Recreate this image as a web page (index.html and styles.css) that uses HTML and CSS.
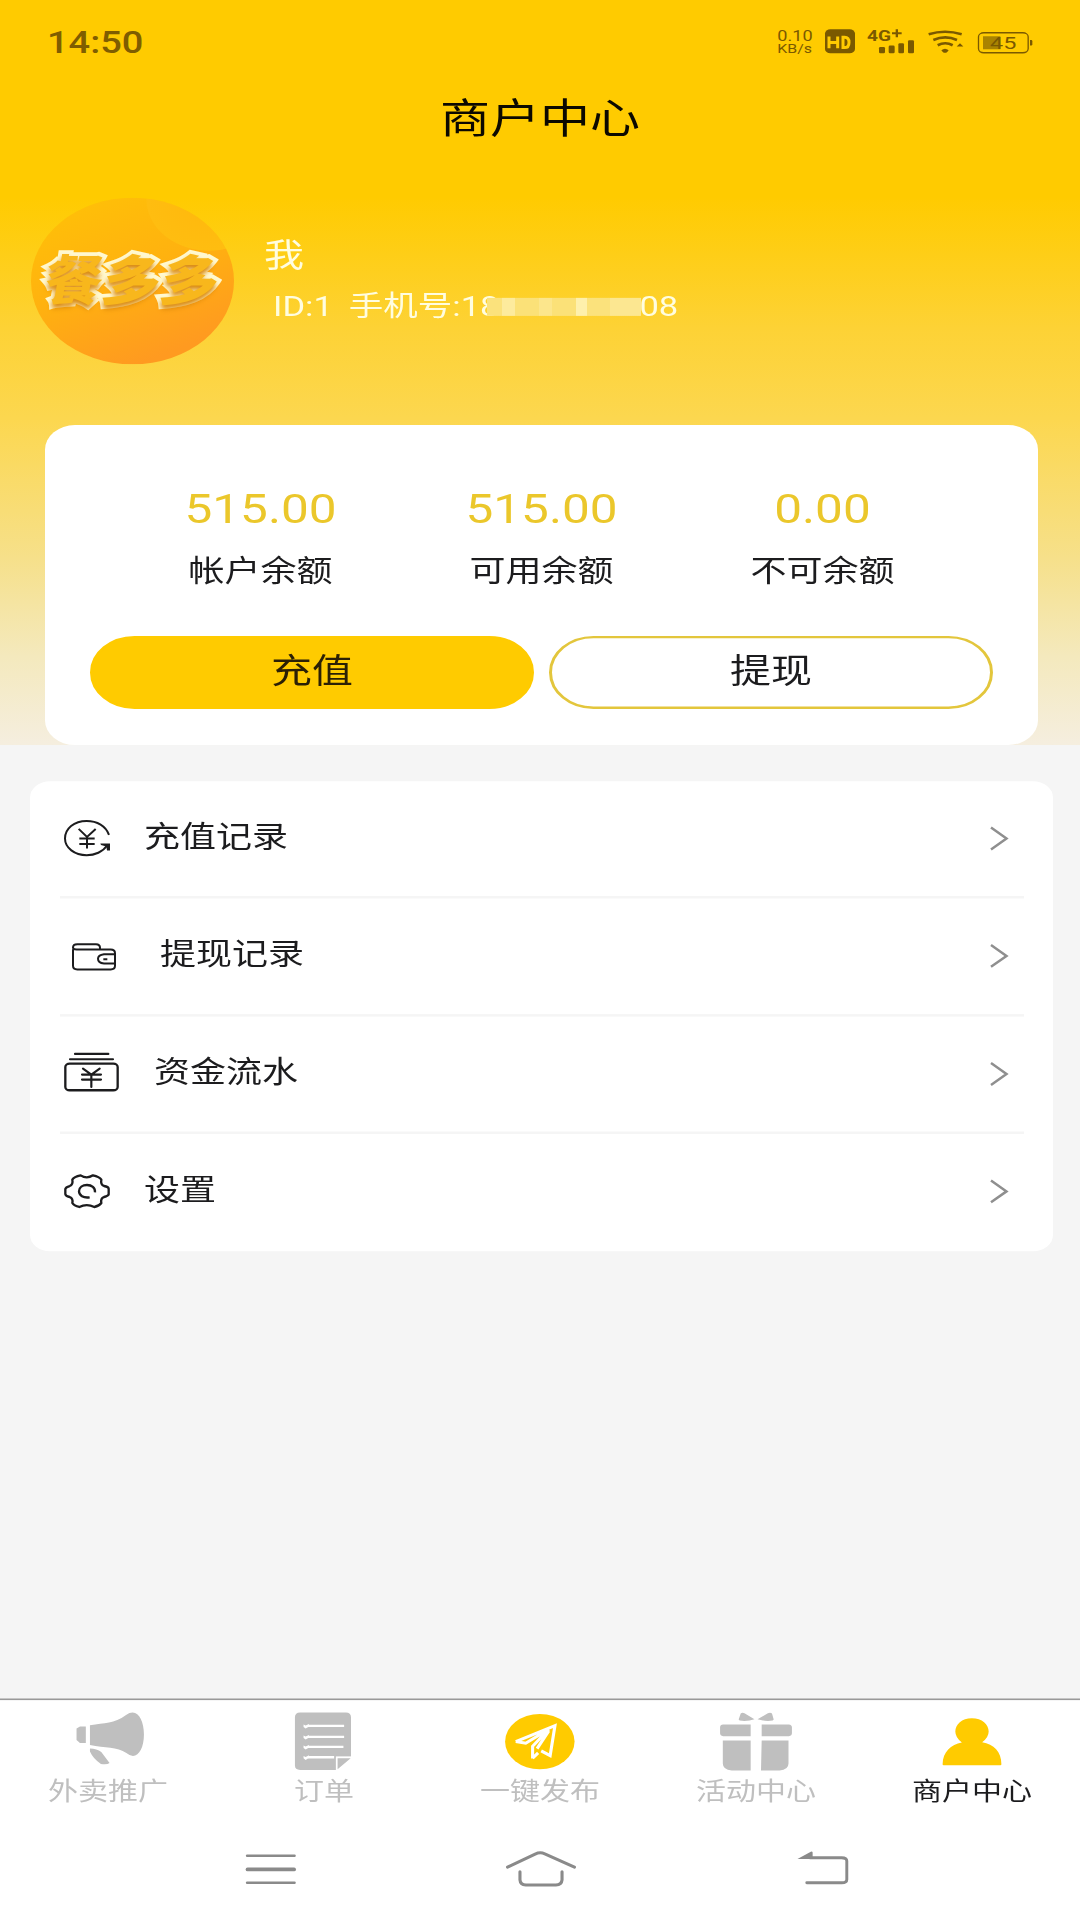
FILE: index.html
```html
<!DOCTYPE html>
<html lang="zh-CN">
<head>
<meta charset="utf-8">
<title>商户中心</title>
<link rel="stylesheet" href="styles.css">
</head>
<body>
<div class="screen">
  <header class="hero">
    <div class="status">
      <span class="time">14:50</span>
      <svg class="status-icons" viewBox="105 78 780 93" preserveAspectRatio="none">
        <g fill="#7a5900">
          <text x="112" y="121" font-size="46" textLength="106" lengthAdjust="spacingAndGlyphs">0.10</text>
          <text x="112" y="159" font-size="37" textLength="104" lengthAdjust="spacingAndGlyphs">KB/s</text>
          <rect x="255" y="87" width="90" height="72" rx="16" ry="13"/>
          <text x="381" y="121" font-size="45" font-weight="700" textLength="72" lengthAdjust="spacingAndGlyphs">4G</text>
          <path d="M456 96h11v-9h7v9h11v6h-11v9h-7v-9h-11z"/>
          <rect x="417" y="140" width="18" height="19" rx="4"/>
          <rect x="446" y="136" width="18" height="23" rx="4"/>
          <rect x="475" y="129" width="17" height="30" rx="4"/>
          <rect x="504" y="120" width="18" height="39" rx="4"/>
          <path d="M604 150q11-9 22 0l-5 6q-6 3-12 0zM650 139l10-10 10 10z"/>
          <rect x="729" y="108" width="52" height="39" fill="#a98300"/>
          <path d="M870 119h4q3 0 3 4v9q0 4-3 4h-4z"/>
          <text x="750" y="147" font-size="52" textLength="79" lengthAdjust="spacingAndGlyphs">45</text>
        </g>
        <g fill="none" stroke="#7a5900">
          <path stroke-width="8" d="M566 102q49-15 99 0M580 119q36-15 71 0M593 135q23-12 45 0"/>
          <rect x="715.500" y="97.500" width="149" height="60" rx="16" ry="12" stroke-width="4"/>
        </g>
        <path d="M267 109v35M293 109v35M267 127h26M309 111h5q13 0 13 15.500t-13 15.500h-5z" fill="none" stroke="#ffcb00" stroke-width="9"/>
      </svg>
    </div>
    <h1 class="title">商户中心</h1>
    <section class="profile">
      <div class="avatar"><span class="logo">餐多多</span></div>
      <div class="who">
        <div class="name">我</div>
        <div class="contact"><span>ID:1</span><span class="phone">手机号:18<i class="mask"></i>08</span></div>
      </div>
    </section>
    <section class="balance">
      <div class="figures">
        <div class="figure"><b>515.00</b><span>帐户余额</span></div>
        <div class="figure"><b>515.00</b><span>可用余额</span></div>
        <div class="figure"><b>0.00</b><span>不可余额</span></div>
      </div>
      <div class="actions">
        <button class="btn primary">充值</button>
        <button class="btn">提现</button>
      </div>
    </section>
  </header>

  <main class="content">
    <ul class="menu">
      <li class="row">
        <svg class="ic ic-recharge" viewBox="126 143 150 130" preserveAspectRatio="none">
          <path d="M267 196C258 169 231 154 200 154C162 154 135 178 135 207C135 235 164 257 200 257C224 257 249 247 261 228M176 178L201 202L227 178M201 202V237M178 207H224M178 223H224" stroke-width="6"/>
          <path class="solid" d="M241 222H270V243H261L259 231L243 226z"/>
        </svg>
        <span>充值记录</span>
        <svg class="chev" viewBox="0 0 20 28" preserveAspectRatio="none"><path d="M2 3L17.500 14L2 25"/></svg>
      </li>
      <li class="row">
        <svg class="ic ic-wallet" viewBox="150 507 144 102" preserveAspectRatio="none">
          <path d="M159 536V586Q159 597 172 597H272Q285 597 285 586V548Q285 537 272 537H170Q159 537 159 531Q159 521 172 521H228Q240 521 240 532V537M285 551H252Q234 553 234 565Q234 578 252 579H285" stroke-width="6"/>
          <path d="M250 566H262" stroke-width="6"/>
        </svg>
        <span>提现记录</span>
        <svg class="chev" viewBox="0 0 20 28" preserveAspectRatio="none"><path d="M2 3L17.500 14L2 25"/></svg>
      </li>
      <li class="row">
        <svg class="ic ic-cash" viewBox="126 92 177 140" preserveAspectRatio="none">
          <rect x="136" y="132" width="157" height="80" rx="13" ry="10" stroke-width="7"/>
          <path d="M165 103H265M150 119H279M189 147L214 165L239 147M214 165V202M186 165H243M186 180H243" stroke-width="6.500" stroke-linecap="round"/>
        </svg>
        <span>资金流水</span>
        <svg class="chev" viewBox="0 0 20 28" preserveAspectRatio="none"><path d="M2 3L17.500 14L2 25"/></svg>
      </li>
      <li class="row">
        <svg class="ic ic-gear" viewBox="126 455 150 119" preserveAspectRatio="none">
          <path d="M182 466Q200 478 219 466Q238 470 244 479Q241 494 252 498Q265 500 266 506V523Q265 528 252 531Q241 535 244 549Q238 558 223 561Q200 550 178 561Q162 557 157 549Q160 535 149 531Q136 528 136 522V507Q137 501 149 498Q160 494 157 479Q162 470 182 466Z" stroke-width="7" stroke-linejoin="round"/>
          <path d="M209 532C190 535 177 526 177 514C177 502 188 495 201 495C215 495 226 503 225 517" stroke-width="7"/>
        </svg>
        <span>设置</span>
        <svg class="chev" viewBox="0 0 20 28" preserveAspectRatio="none"><path d="M2 3L17.500 14L2 25"/></svg>
      </li>
    </ul>
  </main>

  <footer class="footer">
    <nav class="tabs">
      <a class="tab">
        <svg viewBox="203 66 221 180" preserveAspectRatio="none"><path d="M232 111H249V160H232L222 151V117zM261 107C305 99 330 103 366 76Q376 69 385 69C405 69 418 99 418 135C418 172 405 199 386 199Q378 199 367 190C340 170 305 176 261 166zM261 177Q281 178 294 187L318 220Q311 226 293 223Q271 209 261 186z"/></svg>
        <span>外卖推广</span>
      </a>
      <a class="tab">
        <svg viewBox="831 66 221 180" preserveAspectRatio="none">
          <path d="M872 69H1005Q1020 69 1020 83V201H976V241H872Q857 241 857 228V83Q857 69 872 69zM981 206H1019L981 239z"/>
          <path d="M895 109H1000M895 142H1000M895 172H998M895 203H971" stroke="#fff" stroke-width="7"/>
          <path d="M882 105l6 3 10-5-2 9-8 5-6-5zM882 138l6 3 10-5-2 9-8 5-6-5zM882 168l6 3 10-5-2 9-8 5-6-5zM882 199l6 3 10-5-2 9-8 5-6-5z" fill="#fff"/>
          <path d="M978 241V203H1020" fill="none" stroke="#fff" stroke-width="3"/>
        </svg>
        <span>订单</span>
      </a>
      <a class="tab">
        <svg viewBox="1458 66 221 180" preserveAspectRatio="none">
          <ellipse cx="1568" cy="156" rx="101" ry="83" fill="#ffcb00"/>
          <path d="M1498 156L1612 108L1598 198L1572 184M1498 156L1527 161L1594 119L1547 170V207M1560 177L1594 124M1547 206L1563 190" fill="none" stroke="#fff" stroke-width="9"/>
        </svg>
        <span>一键发布</span>
      </a>
      <a class="tab">
        <svg viewBox="517 66 221 180" preserveAspectRatio="none"><path d="M577 90L583 72Q587 68 594 71L623 89Q603 96 580 93zM679 90L674 72Q670 68 662 71L632 89Q653 96 676 93zM532 105H612V140H532Q523 138 523 131V113Q523 106 532 105zM644 105H723Q732 106 732 114V131Q732 138 723 140H644zM531 153H612V243H557Q531 241 531 222zM644 153H722V222Q722 241 696 243H642z"/></svg>
        <span>活动中心</span>
      </a>
      <a class="tab active">
        <svg viewBox="1144 66 221 180" preserveAspectRatio="none"><path d="M1254 86C1284 86 1303 104 1303 126Q1303 144 1284 158C1318 163 1340 187 1340 224Q1340 227 1337 227H1172Q1169 227 1169 224C1170 187 1193 165 1225 159Q1206 144 1206 126C1206 104 1225 86 1254 86z"/></svg>
        <span>商户中心</span>
      </a>
    </nav>
    <div class="sysnav">
      <svg viewBox="671 480 232 120" preserveAspectRatio="none"><path d="M718 499H855M718 580H855" stroke-width="8"/><path d="M719 540H854" stroke-width="11"/></svg>
      <svg viewBox="1455 480 232 120" preserveAspectRatio="none"><path d="M1474 533L1554 494Q1568 487 1582 493L1668 533M1510 547V571Q1511 585 1527 587H1614Q1631 585 1632 571V547" stroke-width="9"/></svg>
      <svg class="back" viewBox="707 480 232 120" preserveAspectRatio="none"><path d="M776 580H877Q892 580 892 570V515Q892 505 877 505H785" stroke-width="8.500"/><path d="M749 509L789 486Q793 486 793 490V509z" fill="#8a8a8a" stroke="none"/></svg>
    </div>
  </footer>
</div>
</body>
</html>
```
FILE: styles.css
```css
* { box-sizing: border-box; }
html { height: 1920px; overflow: hidden; }
body {
  margin: 0;
  height: 1920px;
  overflow: hidden;
  background: #f5f5f5;
  font-family: Roboto, "Noto Sans CJK SC", sans-serif;
  color: #1c1c1e;
}
/* 1080x2340 phone layout fitted to a 1920px tall viewport */
.screen {
  width: 1080px;
  height: 2340px;
  display: flex;
  flex-direction: column;
  transform: scaleY(0.820513);
  transform-origin: 0 0;
}
svg { display: block; flex: none; }

.hero {
  height: 908px;
  background: linear-gradient(#ffcb00 0, #ffcb00 240px, #fdd235 400px, #fcd74f 510px, #f6e08a 680px, #f4e9bd 800px, #f5eedf 908px);
}
.status {
  height: 101px;
  padding: 0 45px 0 47px;
  display: flex;
  align-items: center;
  justify-content: space-between;
}
.time { font-size: 38px; font-weight: 500; color: #7f5d00; line-height: 44px; }
.status-icons { width: 260px; height: 37.8px; }
.title {
  margin: 0;
  height: 90px;
  line-height: 88px;
  text-align: center;
  font-size: 50px;
  font-weight: 400;
  color: #0c0900;
}
.profile { display: flex; margin: 50px 0 0 31px; height: 203px; }
.avatar {
  width: 203px;
  height: 203px;
  border-radius: 50%;
  display: flex;
  align-items: center;
  justify-content: center;
  background:
    radial-gradient(circle at 178px 2px, #ffb80c 0, #ffbd10 62px, transparent 63px),
    linear-gradient(155deg, #ffbf08 10%, #ffb20f 45%, #ff9a20 85%);
}
.logo {
  font-size: 58px;
  font-weight: 900;
  line-height: 80px;
  white-space: nowrap;
  color: #f8b71c;
  -webkit-text-stroke: 8px #fff8cf;
  paint-order: stroke fill;
  transform: skewX(-8deg) scaleY(1.13);
  text-shadow: 0 4px 5px #d9860a;
}
.who { padding: 42px 0 0 30px; color: #fffde0; }
.name { font-size: 40px; line-height: 60px; }
.contact { display: flex; gap: 16px; padding-left: 9px; font-size: 34.5px; line-height: 60px; }
.phone { display: flex; }
.mask {
  width: 154px;
  height: 22px;
  margin: 20px -2px 0 -12px;
  background: linear-gradient(90deg, #fbe27c 0 10%, #fdeb9d 10% 18%, #fbe178 18% 34%, #fce68c 34% 42%, #fbe178 42% 58%, #fef0ac 58% 65%, #fbe27c 65% 80%, #fce791 80%);
}

.balance {
  margin: 74px 42px 0 45px;
  height: 390px;
  padding: 70px 45px 0;
  background: #fff;
  border-radius: 30px;
}
.figures { display: grid; grid-template-columns: repeat(3, 281px); padding-left: 30px; }
.figure { display: flex; flex-direction: column; align-items: center; gap: 19px; }
.figure b { font-size: 49.5px; line-height: 64px; font-weight: 400; color: #ebc72b; }
.figure span { font-size: 36px; line-height: 50px; }
.actions { display: flex; gap: 15px; margin-top: 54px; }
.btn {
  flex: 1;
  height: 89px;
  padding: 0 0 3px;
  border: 3px solid #e3c63c;
  border-radius: 45px;
  background: #fff;
  color: #1c1c1e;
  font: 41px/60px Roboto, "Noto Sans CJK SC", sans-serif;
}
.btn.primary { background: #ffcb00; border-color: #ffcb00; color: #2b2005; }

.content { flex: 1; }
.menu {
  list-style: none;
  margin: 44px 27px 0 30px;
  padding: 0;
  background: #fff;
  border-radius: 20px;
}
.row {
  height: 143.3px;
  margin: 0 29px 0 30px;
  padding: 0 15px 0 2px;
  display: flex;
  align-items: center;
  font-size: 36px;
  border-bottom: 3px solid #f5f5f5;
}
.row:last-child { border-bottom-color: transparent; }
.row span { line-height: 50px; margin-top: -4px; }
.ic { fill: none; stroke: #1c1c1e; }
.ic .solid { fill: #1c1c1e; stroke: none; }
.ic-recharge { width: 50px; height: 52.8px; margin-right: 32px; }
.ic-wallet { width: 48px; height: 41.4px; margin: 0 42px 0 8px; }
.ic-cash { width: 59px; height: 56.9px; margin-right: 33px; }
.ic-gear { width: 50px; height: 48.3px; margin-right: 32px; }
.chev { width: 20px; height: 34px; margin-left: auto; fill: none; stroke: #8f8f8f; stroke-width: 2.5; }

.footer { height: 270px; background: #fff; border-top: 2px solid #999; }
.tabs { display: grid; grid-template-columns: repeat(5, 1fr); padding-top: 14px; }
.tab {
  display: flex;
  flex-direction: column;
  align-items: center;
  gap: 3px;
  font-size: 30px;
  line-height: 44px;
  color: #bfbfbf;
}
.tab svg { width: 76px; height: 73.1px; fill: #bfbfbf; }
.tab.active { color: #1c1c1e; }
.tab.active svg { fill: #ffcb00; }
.sysnav { display: flex; gap: 190px; padding: 48px 0 0 231px; }
.sysnav svg { width: 80px; height: 48.75px; fill: none; stroke: #8a8a8a; stroke-linecap: round; }
.sysnav .back { margin-left: 12px; }
```
